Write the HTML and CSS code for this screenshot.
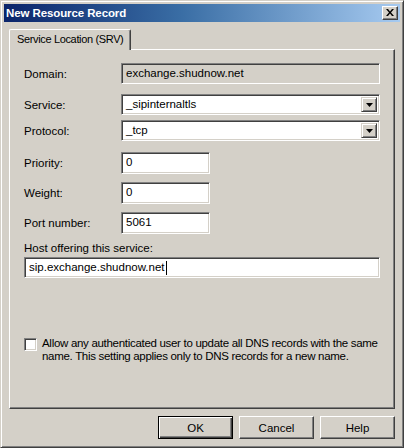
FILE: index.html
```html
<!DOCTYPE html>
<html>
<head>
<meta charset="utf-8">
<link rel="stylesheet" href="styles.css">
</head>
<body>
<div class="window">
  <div class="titlebar">
    <span class="title">New Resource Record</span>
    <span class="close"><svg width="8" height="7" viewBox="0 0 8 7"><path d="M0 0h2l2 2.5L6 0h2L5 3.5 8 7H6L4 4.5 2 7H0l3-3.5z" fill="#000"/></svg></span>
  </div>
  <div class="client">
    <div class="tabs"><div class="tab">Service Location (SRV)</div></div>
    <div class="panel">
      <div class="row first">
        <span class="lbl">Domain:</span>
        <div class="field ro">exchange.shudnow.net</div>
      </div>
      <div class="row r-service">
        <span class="lbl">Service:</span>
        <div class="field combo"><span class="val">_sipinternaltls</span><span class="arrow"><svg width="7" height="4" viewBox="0 0 7 4"><path d="M0 0h7L3.5 4z" fill="#000"/></svg></span></div>
      </div>
      <div class="row r-proto">
        <span class="lbl">Protocol:</span>
        <div class="field combo"><span class="val">_tcp</span><span class="arrow"><svg width="7" height="4" viewBox="0 0 7 4"><path d="M0 0h7L3.5 4z" fill="#000"/></svg></span></div>
      </div>
      <div class="row r-prio">
        <span class="lbl">Priority:</span>
        <div class="field small">0</div>
      </div>
      <div class="row r-small">
        <span class="lbl">Weight:</span>
        <div class="field small">0</div>
      </div>
      <div class="row r-small">
        <span class="lbl">Port number:</span>
        <div class="field small">5061</div>
      </div>
      <div class="hostlbl">Host offering this service:</div>
      <div class="field host">sip.exchange.shudnow.net<span class="caret"></span></div>
      <div class="check">
        <span class="box"></span>
        <span class="ctext">Allow any authenticated user to update all DNS records with the same<br>name. This setting applies only to DNS records for a new name.</span>
      </div>
    </div>
    <div class="buttons">
      <div class="btn default"><span>OK</span></div>
      <div class="btn">Cancel</div>
      <div class="btn">Help</div>
    </div>
  </div>
</div>
</body>
</html>
```

FILE: styles.css
```css
* { box-sizing: border-box; }
html, body { margin: 0; padding: 0; }
body {
  width: 404px;
  height: 448px;
  background: #d4d0c8;
  font-family: "Liberation Sans", Arial, sans-serif;
  font-size: 11.5px;
  color: #000;
  overflow: hidden;
}
.window {
  width: 404px;
  height: 448px;
  background: #d4d0c8;
  border-top: 1px solid #d4d0c8;
  border-left: 1px solid #d4d0c8;
  border-right: 1px solid #404040;
  border-bottom: 1px solid #404040;
  box-shadow: inset 1px 1px 0 #fff, inset -1px -1px 0 #808080;
  padding: 3px 3px 3px 3px;
  display: flex;
  flex-direction: column;
}
.titlebar {
  height: 18px;
  flex: none;
  background: linear-gradient(to right, #0a246a 0%, #3a6ea5 45%, #a6caf0 100%);
  display: flex;
  align-items: center;
  justify-content: space-between;
  padding: 0 2px 0 2px;
}
.title {
  color: #fff;
  font-weight: bold;
  font-family: "Liberation Sans", Arial, sans-serif;
  font-size: 11.5px;
  letter-spacing: -0.1px;
}
.close {
  width: 16px;
  height: 14px;
  background: #d4d0c8;
  border-top: 1px solid #fff;
  border-left: 1px solid #fff;
  border-right: 1px solid #404040;
  border-bottom: 1px solid #404040;
  box-shadow: inset -1px -1px 0 #808080;
  display: flex;
  align-items: center;
  justify-content: center;
  padding-bottom: 1px;
}
.client {
  flex: 1;
  display: flex;
  flex-direction: column;
  padding: 7px 5px 0 5px;
}
.tabs {
  display: flex;
  height: 20px;
  flex: none;
  position: relative;
  z-index: 1;
}
.tab {
  height: 21px;
  padding: 3px 7px 0 7px;
  border-top: 1px solid #fff;
  border-left: 1px solid #fff;
  border-right: 1px solid #404040;
  box-shadow: inset -1px 0 0 #808080;
  border-radius: 2px 2px 0 0;
  background: #d4d0c8;
  white-space: nowrap;
  font-size: 11px;
  letter-spacing: -0.35px;
}
.panel {
  height: 360px;
  flex: none;
  border-top: 1px solid #fff;
  border-left: 1px solid #fff;
  border-right: 1px solid #404040;
  border-bottom: 1px solid #404040;
  box-shadow: inset -1px -1px 0 #808080;
  padding: 13px 14px 0 14px;
  display: flex;
  flex-direction: column;
}
.row {
  display: flex;
  align-items: center;
  height: 21px;
}
.lbl {
  width: 97px;
  flex: none;
  white-space: nowrap;
}
.field {
  height: 21px;
  background: #fff;
  border-top: 1px solid #808080;
  border-left: 1px solid #808080;
  border-right: 1px solid #fff;
  border-bottom: 1px solid #fff;
  box-shadow: inset 1px 1px 0 #404040, inset -1px -1px 0 #d4d0c8;
  padding: 3px 3px 0 4px;
  white-space: nowrap;
}
.field.ro { width: 259px; background: #d4d0c8; }
.r-service { margin-top: 10px; }
.r-proto { margin-top: 5px; }
.r-prio { margin-top: 11px; height: 22px; }
.r-small { margin-top: 8px; height: 22px; }
.field.small { width: 89px; height: 22px; }
.combo {
  width: 259px;
  display: flex;
  align-items: flex-start;
  justify-content: space-between;
  padding: 2px 2px 2px 4px;
}
.combo .val { padding-top: 1px; }
.arrow {
  width: 16px;
  height: 15px;
  background: #d4d0c8;
  border-top: 1px solid #d4d0c8;
  border-left: 1px solid #d4d0c8;
  border-right: 1px solid #404040;
  border-bottom: 1px solid #404040;
  box-shadow: inset 1px 1px 0 #fff, inset -1px -1px 0 #808080;
  display: flex;
  align-items: center;
  justify-content: center;
}
.hostlbl { margin-top: 8px; height: 15px; white-space: nowrap; }
.field.host {
  width: 356px;
  margin-top: 0;
  display: flex;
  align-items: flex-start;
}
.caret {
  display: inline-block;
  width: 1px;
  height: 14px;
  background: #000;
  margin-left: 1px;
}
.check {
  margin-top: 59px;
  display: flex;
  align-items: flex-start;
}
.box {
  width: 13px;
  height: 13px;
  flex: none;
  background: #fff;
  border-top: 1px solid #808080;
  border-left: 1px solid #808080;
  border-right: 1px solid #fff;
  border-bottom: 1px solid #fff;
  box-shadow: inset 1px 1px 0 #404040, inset -1px -1px 0 #d4d0c8;
  margin-top: 1px;
  margin-right: 5px;
}
.ctext { line-height: 13px; white-space: nowrap; letter-spacing: -0.3px; }
.buttons {
  display: flex;
  justify-content: flex-end;
  gap: 6px;
  padding: 7px 0 0 0;
}
.btn {
  width: 75px;
  height: 23px;
  background: #d4d0c8;
  border-top: 1px solid #fff;
  border-left: 1px solid #fff;
  border-right: 1px solid #404040;
  border-bottom: 1px solid #404040;
  box-shadow: inset -1px -1px 0 #808080;
  display: flex;
  align-items: center;
  justify-content: center;
}
.btn.default {
  border: 1px solid #000;
  box-shadow: inset 1px 1px 0 #fff, inset -1px -1px 0 #404040, inset -2px -2px 0 #808080;
}
```
